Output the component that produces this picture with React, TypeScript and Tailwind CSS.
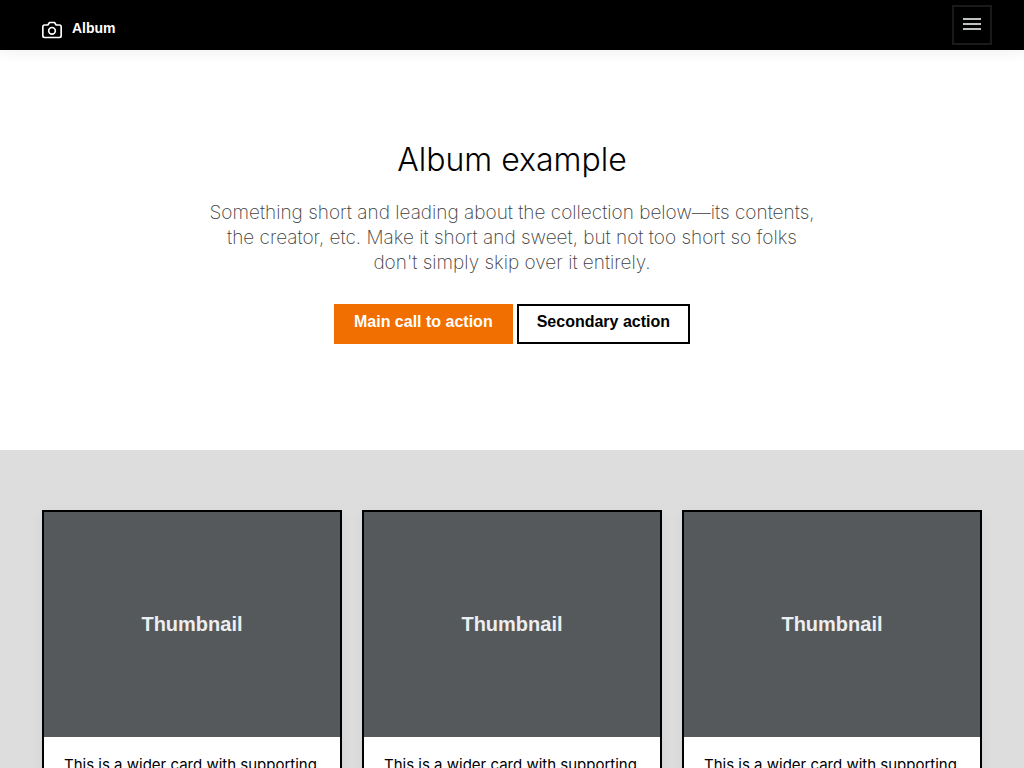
const helvetica = "font-['Helvetica_Neue','Liberation_Sans',Arial,sans-serif]";
const body = "font-['Inter','Helvetica_Neue',Arial,sans-serif]";

function Header() {
  return (
    <header className="relative flex h-[50px] items-center justify-between bg-black pl-[42px] pr-8 shadow-[0_4px_12px_rgba(0,0,0,0.05)]">
      <a href="#" className="flex items-start gap-[10px] pt-2 text-sm leading-5 font-bold text-white">
        <svg
          className="mt-[2px] size-5"
          viewBox="0 0 24 24"
          fill="none"
          stroke="currentColor"
          strokeWidth="2"
          strokeLinecap="round"
          strokeLinejoin="round"
          aria-hidden="true"
        >
          <path d="M23 19a2 2 0 0 1-2 2H3a2 2 0 0 1-2-2V8a2 2 0 0 1 2-2h4l2-3h6l2 3h4a2 2 0 0 1 2 2z" />
          <circle cx="12" cy="13" r="4" />
        </svg>
        <span>Album</span>
      </a>
      <button
        type="button"
        aria-label="Toggle navigation"
        className="flex size-10 flex-col items-center gap-[3px] border-2 border-[#1a1a1a] pt-[11px]"
      >
        <span className="h-[2px] w-[18px] bg-[#bec2c2]" />
        <span className="h-[2px] w-[18px] bg-[#bec2c2]" />
        <span className="h-[2px] w-[18px] bg-[#bec2c2]" />
      </button>
    </header>
  );
}

function Hero() {
  return (
    <section className="flex flex-col items-center px-4 pt-[90px] pb-[106px] text-center">
      <h1 className={`${body} text-[32px] leading-10 font-light text-black`}>Album example</h1>
      <p className={`${body} mt-5 max-w-[612px] text-[19px] leading-[25px] font-extralight text-[#404040]`}>
        Something short and leading about the collection below—its contents, the creator, etc. Make it short and
        sweet, but not too short so folks don't simply skip over it entirely.
      </p>
      <div className="mt-[29px] flex flex-wrap justify-center gap-1">
        <a
          href="#"
          className="flex h-10 items-center border-2 border-[#f16e00] bg-[#f16e00] px-[18px] pb-1 text-base font-bold text-white"
        >
          Main call to action
        </a>
        <a
          href="#"
          className="flex h-10 items-center border-2 border-black bg-white px-[18px] pb-1 text-base font-bold text-black"
        >
          Secondary action
        </a>
      </div>
    </section>
  );
}

function AlbumCard() {
  return (
    <article className="border-2 border-black bg-white shadow-[0_4px_12px_rgba(0,0,0,0.05)]">
      <div className="flex h-[225px] items-center justify-center bg-[#55595c] pb-[2px] text-xl font-bold text-[#eceeef]">
        Thumbnail
      </div>
      <p className={`${body} px-5 pt-[18px] pb-5 text-[15px] leading-5 whitespace-nowrap text-black`}>
        This is a wider card with supporting
      </p>
    </article>
  );
}

export default function App() {
  return (
    <div className={`${helvetica} flex min-h-screen flex-col bg-white`}>
      <Header />
      <main className="flex grow flex-col">
        <Hero />
        <section className="grow bg-[#ddd] px-[42px] py-[60px]">
          <div className="grid grid-cols-3 gap-5">
            <AlbumCard />
            <AlbumCard />
            <AlbumCard />
          </div>
        </section>
      </main>
    </div>
  );
}
